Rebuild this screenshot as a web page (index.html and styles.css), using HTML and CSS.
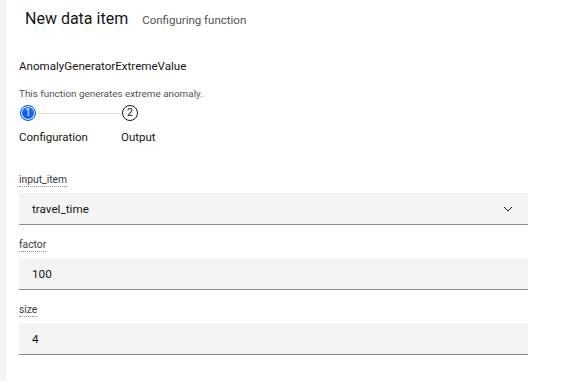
FILE: index.html
```html
<!DOCTYPE html>
<html lang="en">
<head>
  <meta charset="UTF-8">
  <title>New data item</title>
  <link rel="stylesheet" href="styles.css">
</head>
<body>
  <div class="rail"></div>

  <main class="panel">
    <header class="head">
      <h1>New data item</h1>
      <span class="sub">Configuring function</span>
    </header>

    <h2 class="fn-name">AnomalyGeneratorExtremeValue</h2>
    <p class="fn-desc">This function generates extreme anomaly.</p>

    <div class="steps">
      <div class="step current">
        <div class="marker">
          <span class="dot">1</span>
          <span class="line"></span>
        </div>
        <span class="step-label">Configuration</span>
      </div>
      <div class="step">
        <div class="marker">
          <span class="dot">2</span>
        </div>
        <span class="step-label">Output</span>
      </div>
    </div>

    <form class="fields">
      <div class="field">
        <label>input_item</label>
        <div class="control select">
          <span>travel_time</span>
          <svg width="16" height="16" viewBox="0 0 16 16"><path d="M4 6l4 4 4-4" fill="none" stroke="#161616" stroke-width="1"/></svg>
        </div>
      </div>
      <div class="field">
        <label>factor</label>
        <div class="control"><span>100</span></div>
      </div>
      <div class="field">
        <label>size</label>
        <div class="control"><span>4</span></div>
      </div>
    </form>
  </main>
</body>
</html>
```

FILE: styles.css
```css
* { box-sizing: border-box; }

body {
  margin: 0;
  display: flex;
  min-height: 381px;
  font-family: Roboto, sans-serif;
  color: #161616;
  background: #fff;
}

.rail {
  width: 6px;
  background: #f4f4f4;
  flex-shrink: 0;
}

.panel {
  flex: 1;
  padding: 0 57px 0 13px;
}

.head {
  display: flex;
  align-items: baseline;
  gap: 14px;
  margin-top: 8px;
  padding-left: 6px;
  height: 22px;
  line-height: 22px;
}

.head h1 {
  margin: 0;
  font-size: 16px;
  font-weight: 400;
  color: #161616;
}

.sub {
  font-size: 11.5px;
  color: #525252;
}

.fn-name {
  margin: 28px 0 0;
  font-size: 11.6px;
  font-weight: 400;
  line-height: 16px;
}

.fn-desc {
  margin: 13px 0 0;
  font-size: 9.9px;
  line-height: 14px;
  color: #525252;
}

.steps {
  display: flex;
  margin-top: 3px;
}

.step {
  display: flex;
  flex-direction: column;
  width: 102px;
}

.marker {
  display: flex;
  align-items: center;
  height: 18px;
  padding-left: 1px;
}

.dot {
  width: 16px;
  height: 16px;
  border-radius: 50%;
  border: 1px solid #161616;
  font-size: 10.5px;
  line-height: 14px;
  text-align: center;
  flex-shrink: 0;
}

.current .dot {
  background: #0f62fe;
  border: 1px solid #0f62fe;
  box-shadow: inset 0 0 0 1px #fff;
  color: #fff;
}

.line {
  flex: 1;
  height: 1px;
  background: #e0e0e0;
  margin: 0 0 0 2px;
}

.step-label {
  margin-top: 7px;
  font-size: 11.5px;
  line-height: 16px;
}

.fields {
  margin-top: 28px;
}

.field {
  display: flex;
  flex-direction: column;
  align-items: flex-start;
  margin-bottom: 13px;
}

.field label {
  font-size: 10.3px;
  line-height: 13px;
  color: #393939;
  border-bottom: 1px dotted #8d8d8d;
  margin-bottom: 6px;
}

.control {
  align-self: stretch;
  display: flex;
  align-items: center;
  justify-content: space-between;
  height: 32px;
  padding: 0 12px 0 13px;
  background: #f4f4f4;
  border-bottom: 1px solid #8d8d8d;
  font-size: 11.7px;
}
```
